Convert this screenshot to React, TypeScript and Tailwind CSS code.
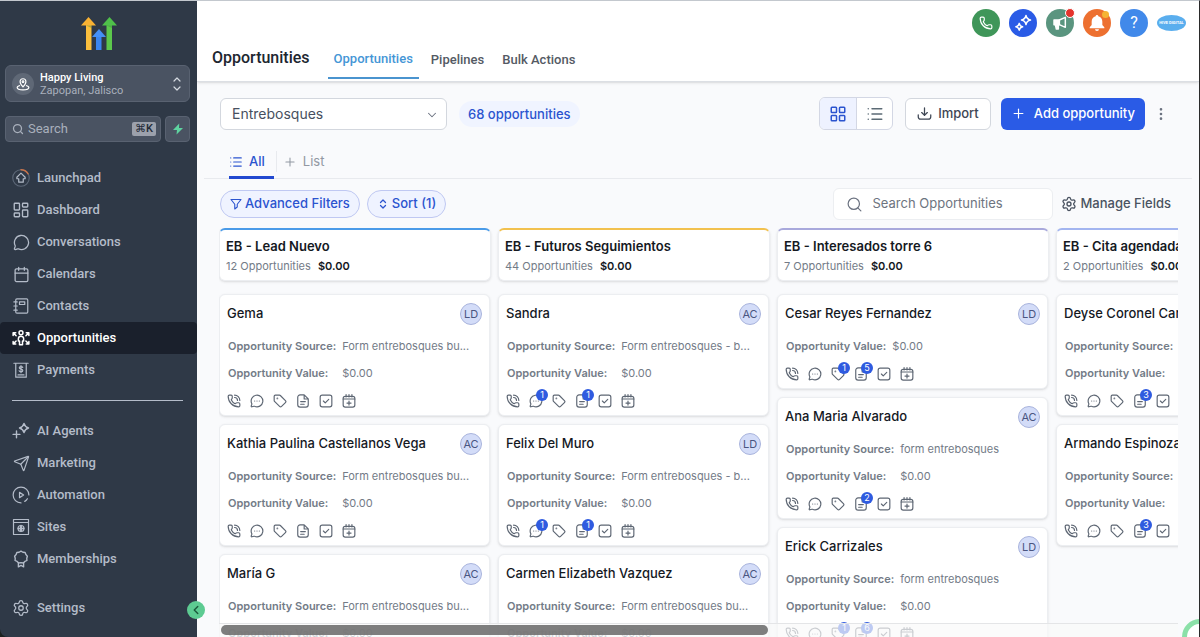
import type { ReactNode } from "react";
import {
  Calendar,
  ChevronDown,
  ChevronLeft,
  ChevronsUpDown,
  EllipsisVertical,
  LayoutDashboard,
  LayoutGrid,
  List,
  MessageCircle,
  MessageCircleMore,
  Phone,
  PhoneCall,
  Plus,
  Search,
  Send,
  Settings,
  Tag,
} from "lucide-react";

type CardIcon = "call" | "chat" | "tag" | "note" | "task" | "event";

type Opportunity = {
  name: string;
  owner: string;
  source?: string;
  badges?: Partial<Record<CardIcon, number>>;
};

type Stage = {
  title: string;
  count: number;
  border: string;
  items: Opportunity[];
};

const stages: Stage[] = [
  {
    title: "EB - Lead Nuevo",
    count: 12,
    border: "border-t-[#4a9be8]",
    items: [
      { name: "Gema", owner: "LD", source: "Form entrebosques bu..." },
      { name: "Kathia Paulina Castellanos Vega", owner: "AC", source: "Form entrebosques bu..." },
      { name: "María G", owner: "AC", source: "Form entrebosques bu..." },
    ],
  },
  {
    title: "EB - Futuros Seguimientos",
    count: 44,
    border: "border-t-[#f2c14e]",
    items: [
      { name: "Sandra", owner: "AC", source: "Form entrebosques - b...", badges: { chat: 1, note: 1 } },
      { name: "Felix Del Muro", owner: "LD", source: "Form entrebosques - b...", badges: { chat: 1, note: 1 } },
      { name: "Carmen Elizabeth Vazquez", owner: "AC", source: "Form entrebosques bu..." },
    ],
  },
  {
    title: "EB - Interesados torre 6",
    count: 7,
    border: "border-t-[#a9a9dc]",
    items: [
      { name: "Cesar Reyes Fernandez", owner: "LD", badges: { tag: 1, note: 5 } },
      { name: "Ana Maria Alvarado", owner: "AC", source: "form entrebosques", badges: { note: 2 } },
      { name: "Erick Carrizales", owner: "LD", source: "form entrebosques", badges: { tag: 1, note: 6 } },
    ],
  },
  {
    title: "EB - Cita agendada",
    count: 2,
    border: "border-t-[#a3b5f0]",
    items: [
      { name: "Deyse Coronel Carrillo", owner: "LD", source: "form entrebosques", badges: { note: 3 } },
      { name: "Armando Espinoza", owner: "AC", source: "form entrebosques", badges: { note: 3 } },
    ],
  },
];

function CardGlyph({ children }: { children: ReactNode }) {
  return (
    <svg
      viewBox="0 0 24 24"
      className="size-3.5"
      fill="none"
      stroke="currentColor"
      strokeWidth="2"
      strokeLinecap="round"
      strokeLinejoin="round"
    >
      {children}
    </svg>
  );
}

const cardIcons: { key: CardIcon; label: string; icon: ReactNode }[] = [
  { key: "call", label: "Call", icon: <PhoneCall className="size-3.5" /> },
  { key: "chat", label: "Message", icon: <MessageCircleMore className="size-3.5" /> },
  { key: "tag", label: "Tags", icon: <Tag className="size-3.5" /> },
  {
    key: "note",
    label: "Notes",
    icon: (
      <CardGlyph>
        <path d="M14 1.500H7a4 4 0 0 0-4 4v13a4 4 0 0 0 4 4h10a4 4 0 0 0 4-4V8.500zM14 1.500v7h7M8 13h8M8 17.500h6" />
      </CardGlyph>
    ),
  },
  {
    key: "task",
    label: "Tasks",
    icon: (
      <CardGlyph>
        <rect x="2" y="2" width="20" height="20" rx="3.500" />
        <path d="m7.500 12 3.200 3.200 6-6" />
      </CardGlyph>
    ),
  },
  {
    key: "event",
    label: "Appointment",
    icon: (
      <CardGlyph>
        <rect x="2" y="4" width="20" height="18.500" rx="3.500" />
        <path d="M2 8.500h20M7 1v4M12 1v4M17 1v4M12 12v7M8.500 15.500h7" />
      </CardGlyph>
    ),
  },
];

function Glyph({ children, width = 1.6 }: { children: ReactNode; width?: number }) {
  return (
    <svg
      viewBox="0 0 24 24"
      className="size-[18px]"
      fill="none"
      stroke="currentColor"
      strokeWidth={width}
      strokeLinecap="round"
      strokeLinejoin="round"
    >
      {children}
    </svg>
  );
}

function LaunchpadIcon() {
  return (
    <Glyph>
      <circle cx="12" cy="12" r="11" stroke="#5d6878" strokeWidth="1.5" />
      <path d="M12 1a11 11 0 0 1 9.5 5.500" stroke="#c9744a" strokeWidth="1.8" />
      <path d="M12 5.500 6.500 11v2H9v4.500h6V13h2.500v-2z" />
    </Glyph>
  );
}

function ContactsIcon() {
  return (
    <Glyph>
      <rect x="5" y="2.500" width="16" height="19" rx="1.500" />
      <path d="M2.500 6.500H7M2.500 12H7M2.500 17.500H7M10 6.500h7v3.500h-7z" />
    </Glyph>
  );
}

function OpportunitiesIcon() {
  return (
    <Glyph width={2}>
      <circle cx="12" cy="5" r="2.600" />
      <path d="M10 21v-5H8.500v-3a3.500 3.500 0 0 1 7 0v3H14v5z" />
      <path d="M1.500 8.500V5H5M2 5.500 5.500 9M22.500 8.500V5H19M22 5.500 18.500 9M1.500 16.500V20H5M2 19.500 5.500 16M22.500 16.500V20H19M22 19.500 18.500 16" />
    </Glyph>
  );
}

function PaymentsIcon() {
  return (
    <Glyph>
      <path d="M2.500 3h19M5 3v18.500h14V3M8 18.500h8" />
      <path d="M14.300 8.500c-.4-.8-1.200-1.100-2.300-1.100-1.300 0-2.300.6-2.300 1.700 0 2.500 4.700 1 4.700 3.500 0 1.200-1 1.800-2.400 1.800-1.200 0-2.100-.4-2.500-1.300M12 6.200v9.300" />
    </Glyph>
  );
}

function AgentsIcon() {
  return (
    <Glyph width={1.9}>
      <path d="M16 2c.8 3.200 2.200 4.800 6 6-3.800 1.200-5.200 2.800-6 6-.8-3.200-2.200-4.800-6-6 3.800-1.200 5.200-2.800 6-6zM6 12v9M1.500 16.500h9" />
    </Glyph>
  );
}

function AutomationIcon() {
  return (
    <Glyph>
      <path d="M22.500 12A10.500 10.500 0 1 0 12 22.500M20.500 17a9 9 0 0 1-3.500 3.500" />
      <path d="m10 8.500 5.500 3.500-5.500 3.500z" />
    </Glyph>
  );
}

function SitesIcon() {
  return (
    <Glyph>
      <path d="M2 2h20v20H2zM2 6h20" />
      <circle cx="12" cy="14" r="4" />
      <path d="M8 14h8M12 10c-1.500 2.500-1.500 5.500 0 8M12 10c1.500 2.500 1.500 5.500 0 8" />
    </Glyph>
  );
}

function MembershipsIcon() {
  return (
    <Glyph width={1.8}>
      <path d="M12 1.500 14.500 3l3 .3 1 2.800 2 2.200-.8 2.700.2 3-2.700 1.200L15 17.300 12 16.800l-3 .5-2.200-2.100L4.100 14l.2-3-.8-2.700 2-2.200 1-2.800 3-.3z" />
      <path d="M8.500 17v5.500l3.500-2 3.500 2V17" />
    </Glyph>
  );
}

function Logo() {
  return (
    <svg viewBox="0 0 36 33" className="h-[33px] w-9">
      <path d="M5 8h5.500v25H5z" fill="#fbbf3d" />
      <path d="M7.500 0 15 8.500H0z" fill="#f9b233" />
      <path d="M25.500 8H31v25h-5.500z" fill="#5cc84c" />
      <path d="M28.500 0 36 8.500H21z" fill="#4fc04a" />
      <path d="M15 19h5.500v14H15z" fill="#3b86f0" />
      <path d="m18 12 7 8H11z" fill="#4590f7" />
      <path d="M5 8.500h5.500V11zM25.500 8.500H31V11z" fill="#2f7a35" opacity=".35" />
    </svg>
  );
}

function SparkleIcon() {
  return (
    <svg viewBox="0 0 24 24" className="size-[18px]" fill="none" stroke="white" strokeWidth="2" strokeLinejoin="round">
      <path d="M16 2c.7 3.500 2.300 5.200 6 6-3.700.8-5.300 2.500-6 6-.7-3.500-2.300-5.200-6-6 3.700-.8 5.300-2.500 6-6zM7 12.500c.5 2.600 1.700 4 4.500 4.500-2.800.6-4 2-4.500 4.500-.6-2.500-1.800-3.900-4.500-4.500 2.700-.5 3.900-1.900 4.500-4.500z" />
    </svg>
  );
}

function MegaphoneIcon() {
  return (
    <svg viewBox="0 0 24 24" className="size-4" fill="none" stroke="white" strokeWidth="2.2" strokeLinejoin="round">
      <path d="M11 7.500 20 3.500v15L11 14.500z" />
      <path d="M3 7.500h8v7H3z" fill="white" />
      <path d="M5 14.500h4.500V21H6.500z" fill="white" />
    </svg>
  );
}

function BellIcon() {
  return (
    <svg viewBox="0 0 24 24" className="size-4" fill="white">
      <path d="M12 0a2 2 0 0 1 2 2c4 1 6 4 6 8v5l3 3.500V20H1v-1.500L4 15v-5c0-4 2-7 6-8a2 2 0 0 1 2-2zM9 21.500h6a3 2.500 0 0 1-6 0z" />
    </svg>
  );
}

const mainNav = [
  { label: "Launchpad", icon: <LaunchpadIcon /> },
  { label: "Dashboard", icon: <LayoutDashboard className="size-[18px]" strokeWidth={1.8} /> },
  { label: "Conversations", icon: <MessageCircle className="size-[17px]" strokeWidth={1.8} /> },
  { label: "Calendars", icon: <Calendar className="size-[17px]" strokeWidth={1.8} /> },
  { label: "Contacts", icon: <ContactsIcon /> },
  { label: "Opportunities", icon: <OpportunitiesIcon />, active: true },
  { label: "Payments", icon: <PaymentsIcon /> },
];

const toolsNav = [
  { label: "AI Agents", icon: <AgentsIcon /> },
  { label: "Marketing", icon: <Send className="size-[17px]" strokeWidth={1.7} /> },
  { label: "Automation", icon: <AutomationIcon /> },
  { label: "Sites", icon: <SitesIcon /> },
  { label: "Memberships", icon: <MembershipsIcon /> },
];

function NavItem({ label, icon, active }: { label: string; icon: ReactNode; active?: boolean }) {
  return (
    <a
      href="#"
      className={`flex h-8 items-center gap-[7px] rounded-sm pl-3 text-[13px] font-medium ${
        active ? "bg-[#1a202c] text-white" : "text-[#b4bcc9]"
      }`}
    >
      <span className="flex w-[18px] justify-center">{icon}</span>
      {label}
    </a>
  );
}

function Sidebar() {
  return (
    <aside className="relative w-[197px] shrink-0 rounded-bl-lg bg-[#2f3947] font-[Roboto,sans-serif]">
      <div className="flex justify-center pt-4">
        <Logo />
      </div>
      <button className="mx-[5px] mt-[15px] flex h-[37px] w-[185px] items-center rounded-md border border-[#596271] bg-[#4a5362] pr-1 pl-1.5 text-left">
        <span className="mr-1.5 flex size-[22px] items-center justify-center rounded-full bg-[#5f6876] text-white">
          <svg viewBox="0 0 24 24" className="size-3.5" fill="none" stroke="currentColor" strokeWidth="2">
            <path d="M12 17c-3-3.500-5-6-5-9a5 5 0 0 1 10 0c0 3-2 5.500-5 9z" />
            <circle cx="12" cy="8" r="1.500" />
            <path d="M7 14.500c-3 .8-5 1.800-5 3.500 0 2.500 4.500 4 10 4s10-1.500 10-4c0-1.700-2-2.700-5-3.500" />
          </svg>
        </span>
        <span className="flex-1 text-[11px] leading-[13px]">
          <span className="block font-medium text-white">Happy Living</span>
          <span className="block text-[#a9b0bc]">Zapopan, Jalisco</span>
        </span>
        <svg
          viewBox="0 0 16 16"
          className="size-4 text-[#d5dae1]"
          fill="none"
          stroke="currentColor"
          strokeWidth="1.200"
          strokeLinecap="round"
          strokeLinejoin="round"
        >
          <path d="m5 5 3-3 3 3M5 11l3 3 3-3" />
        </svg>
      </button>
      <div className="mt-3.5 mr-[7px] ml-[5px] flex gap-1">
        <label className="flex h-[26px] min-w-0 flex-1 items-center rounded border border-[#596271] bg-[#4a5362] pr-1 pl-1.5">
          <Search className="size-3 shrink-0 text-[#a9b0bc]" strokeWidth={2.5} />
          <input
            aria-label="Search"
            placeholder="Search"
            className="min-w-0 flex-1 bg-transparent pl-1 text-[13px] outline-none placeholder:text-[#a9b0bc]"
          />
          <kbd className="rounded-xs bg-[#9ca1ac] px-[3px] font-[Roboto,sans-serif] text-[11px] leading-[14px] font-medium text-[#232b38]">
            ⌘K
          </kbd>
        </label>
        <button
          aria-label="Quick actions"
          className="flex h-[26px] w-[25px] items-center justify-center rounded border border-[#596271] bg-[#4a5362]"
        >
          <svg viewBox="0 0 24 24" className="size-3" fill="#5ed3a0">
            <path d="M14.500 1 2 14h8l-1 9L22 10h-8z" />
          </svg>
        </button>
      </div>
      <nav className="mt-5">
        {mainNav.map((item) => (
          <NavItem key={item.label} {...item} />
        ))}
      </nav>
      <hr className="mt-3.5 mr-3.5 ml-3 border-[#b4bcc9]" />
      <nav className="mt-3.5">
        {toolsNav.map((item) => (
          <NavItem key={item.label} {...item} />
        ))}
      </nav>
      <div className="mt-[17px]">
        <NavItem label="Settings" icon={<Settings className="size-[18px]" strokeWidth={1.7} />} />
      </div>
      <button
        aria-label="Collapse sidebar"
        className="absolute -right-2 bottom-[18px] z-10 flex size-[18px] items-center justify-center rounded-full bg-[#5dcb92]"
      >
        <ChevronLeft className="size-3.5 text-[#1c5a3c]" strokeWidth={2.5} />
      </button>
    </aside>
  );
}

function Header() {
  return (
    <header className="flex h-[81px] shrink-0 items-end border-b border-[#dcdfe4] bg-white pr-[13px] pl-[15px] font-[Roboto,sans-serif] shadow-sm">
      <h1 className="mr-[18px] pb-[13px] text-base leading-5 font-medium text-[#20262f]">Opportunities</h1>
      <nav className="flex items-end text-[13px] leading-5 font-medium text-[#545a64]">
        <a href="#" className="mb-0.5 border-b-2 border-[#4a94cf] px-1.5 pb-2 text-[#4596d6]">
          Opportunities
        </a>
        <a href="#" className="ml-3 pb-[11px]">
          Pipelines
        </a>
        <a href="#" className="ml-[18px] pb-[11px]">
          Bulk Actions
        </a>
      </nav>
      <div className="mt-2 ml-auto flex items-center gap-[9px] self-start">
        <button aria-label="Phone" className="flex size-7 items-center justify-center rounded-full bg-[#3f9659] text-white">
          <Phone className="size-3.5" strokeWidth={2} />
        </button>
        <button aria-label="Ask AI" className="flex size-7 items-center justify-center rounded-full bg-[#2a5be6]">
          <SparkleIcon />
        </button>
        <button aria-label="Announcements" className="relative flex size-7 items-center justify-center rounded-full bg-[#5a957f]">
          <MegaphoneIcon />
          <span className="absolute -top-px -right-px size-[10px] rounded-full border border-white bg-[#e5342d]" />
        </button>
        <button aria-label="Notifications" className="relative flex size-7 items-center justify-center rounded-full bg-[#ed7030]">
          <BellIcon />
          <span className="absolute top-0.5 right-0.5 size-[7px] rounded-full bg-[#f5b335]" />
        </button>
        <button aria-label="Help" className="size-7 rounded-full bg-[#4189ea] text-base text-white">
          ?
        </button>
        <button
          aria-label="Account"
          className="h-4 w-[29px] rounded-[50%] bg-[#5aaeee] text-center text-[4px] leading-4 font-bold whitespace-nowrap text-white"
        >
          HIVE DIGITAL
        </button>
      </div>
    </header>
  );
}

function Toolbar() {
  return (
    <div className="mt-[15px] flex items-center pr-[30px] pl-[23px] text-[13px] font-medium">
      <div className="relative w-[227px]">
        <select
          aria-label="Pipeline"
          className="h-8 w-full appearance-none rounded-md border border-[#d3d7de] bg-white pl-[11px] text-sm font-normal text-[#475060]"
        >
          <option>Entrebosques</option>
        </select>
        <ChevronDown className="pointer-events-none absolute top-2.5 right-2 size-3.5 text-[#6b7280]" strokeWidth={1.8} />
      </div>
      <span className="ml-3 rounded-full bg-[#f0f4ff] px-[9px] leading-[26px] text-[#2b54cf]">68 opportunities</span>
      <div className="ml-auto flex h-[33px] overflow-hidden rounded-md border border-[#d3d7e4] bg-white">
        <button aria-label="Board view" className="flex w-9 items-center justify-center bg-[#eef2ff] text-[#2b54cf]">
          <LayoutGrid className="size-[18px]" />
        </button>
        <button
          aria-label="List view"
          className="flex w-9 items-center justify-center border-l border-[#d3d7e4] text-[#5b6a75]"
        >
          <List className="size-[18px]" />
        </button>
      </div>
      <button className="ml-3 flex h-8 items-center gap-1.5 rounded-md border border-[#d3d7de] bg-white px-[11px] text-[#3e4654]">
        <svg
          viewBox="0 0 24 24"
          className="size-[15px]"
          fill="none"
          stroke="currentColor"
          strokeWidth="2"
          strokeLinecap="round"
          strokeLinejoin="round"
        >
          <path d="M12 3v12M7.500 10.500 12 15l4.500-4.500M2 14v3a4 4 0 0 0 4 4h12a4 4 0 0 0 4-4v-3" />
        </svg>
        Import
      </button>
      <button className="ml-2.5 flex h-8 items-center gap-2 rounded-md bg-[#2a5be6] px-2.5 text-white">
        <Plus className="size-[15px]" strokeWidth={1.8} />
        Add opportunity
      </button>
      <button aria-label="More" className="ml-2 text-[#6b7280]">
        <EllipsisVertical className="size-4" />
      </button>
    </div>
  );
}

function ViewTabs() {
  return (
    <div className="mx-[7px] mt-[17px] flex h-8 border-b border-[#e8eaee] pl-[25px] text-[13px]">
      <button className="flex h-8 items-center gap-1.5 border-b-3 border-[#2249d0] pr-[9px] font-medium text-[#2b54cf]">
        <List className="size-3.5" />
        All
      </button>
      <button className="mt-1 mb-1.5 ml-0.5 flex items-center gap-1.5 border-l border-[#e8eaee] pl-1.5 text-[#9298a2]">
        <Plus className="size-3.5" strokeWidth={1.8} />
        List
      </button>
    </div>
  );
}

function Filters() {
  return (
    <div className="mt-[9px] flex items-center pr-[22px] pl-[23px] text-[13px] font-medium">
      <button className="flex h-7 items-center gap-[3px] rounded-full border border-[#bfc8f2] bg-[#eff3ff] px-[9px] text-[#2b54cf]">
        <svg viewBox="0 0 24 24" className="size-3" fill="none" stroke="currentColor" strokeWidth="2.2" strokeLinejoin="round">
          <path d="M2 3h20l-7.500 9.500V18l-5 4v-9.500z" />
        </svg>
        Advanced Filters
      </button>
      <button className="ml-[7px] flex h-7 items-center gap-[3px] rounded-full border border-[#bfc8f2] bg-[#eff3ff] px-[9px] text-[#2b54cf]">
        <ChevronsUpDown className="size-3" strokeWidth={2.5} />
        Sort (1)
      </button>
      <label className="ml-auto flex h-8 w-[220px] items-center gap-2.5 rounded-md border border-[#eceef1] bg-white px-3">
        <Search className="size-[17px] shrink-0 text-[#6b7280]" strokeWidth={1.7} />
        <input
          aria-label="Search Opportunities"
          placeholder="Search Opportunities"
          className="min-w-0 flex-1 bg-transparent font-normal outline-none placeholder:text-[#6d7480]"
        />
      </label>
      <button className="ml-2 flex items-center gap-1 pr-1.5 text-[#4a5361]">
        <Settings className="size-4" strokeWidth={2} />
        Manage Fields
      </button>
    </div>
  );
}

function OpportunityCard({ item }: { item: Opportunity }) {
  return (
    <article className="mr-px rounded-md border border-[#eceef1] bg-white px-[7px] pt-[7px] shadow-sm">
      <div className="flex h-6 items-center justify-between">
        <h3 className="text-[13px] font-medium whitespace-nowrap text-[#15191f]">{item.name}</h3>
        <span className="flex size-[22px] shrink-0 items-center justify-center rounded-full border border-[#a9b4dd] bg-[#d3dcf8] text-[11px] text-[#4a5580]">
          {item.owner}
        </span>
      </div>
      <dl className="mt-[7px] grid grid-cols-[auto_1fr] gap-x-1.5 pl-px text-[11px] leading-[27px] whitespace-nowrap text-[#737b87]">
        {item.source ? (
          <>
            <dt className="font-semibold">Opportunity Source:</dt>
            <dd>{item.source}</dd>
          </>
        ) : null}
        <dt className="font-semibold">Opportunity Value:</dt>
        <dd>$0.00</dd>
      </dl>
      <div className="flex h-7 items-center gap-[9px] text-[#5d6673]">
        {cardIcons.map(({ key, label, icon }) => (
          <button key={key} aria-label={label} className="relative">
            {icon}
            {item.badges?.[key] ? (
              <span className="absolute -top-[5px] -right-[5px] size-3 rounded-full bg-[#2f5be0] text-center text-[9px] leading-3 text-white">
                {item.badges[key]}
              </span>
            ) : null}
          </button>
        ))}
      </div>
    </article>
  );
}

function StageColumn({ stage }: { stage: Stage }) {
  return (
    <section className="w-[272px] shrink-0">
      <header
        className={`h-[53px] rounded-md border border-t-2 border-[#eceef1] bg-white px-1.5 pt-1.5 whitespace-nowrap shadow-sm ${stage.border}`}
      >
        <h2 className="text-[13px] leading-5 font-semibold text-[#15191f]">{stage.title}</h2>
        <p className="text-[11px] leading-5 text-[#737b87]">
          {stage.count} Opportunities <span className="ml-1 font-semibold text-[#15191f]">$0.00</span>
        </p>
      </header>
      <div className="mt-[13px] flex flex-col gap-2">
        {stage.items.map((item) => (
          <OpportunityCard key={item.name} item={item} />
        ))}
      </div>
    </section>
  );
}

export default function App() {
  return (
    <div className="relative flex h-screen overflow-hidden border-t border-r border-t-[#c3c8ce] border-r-[#2a2a2a] bg-[#1c211f] font-[Inter,sans-serif]">
      <Sidebar />
      <main className="flex min-w-0 flex-1 flex-col bg-[#f9fafc]">
        <Header />
        <Toolbar />
        <ViewTabs />
        <Filters />
        <div className="relative mt-2 mr-[21px] ml-[22px] min-h-0 flex-1 overflow-hidden">
          <div className="flex gap-[7px]">
            {stages.map((stage) => (
              <StageColumn key={stage.title} stage={stage} />
            ))}
          </div>
          {/* horizontal scrollbar floats over the cards */}
          <div className="absolute inset-x-0 bottom-0 h-[14px] border-t border-[#e4e5e7] bg-[#fafafa]/70 pt-px">
            <div className="ml-0.5 h-2.5 w-[57%] rounded-full bg-[#707070]/90" />
          </div>
        </div>
      </main>
      <div className="absolute -right-[19px] -bottom-[18px] size-9 rounded-full border-5 border-[#8be0a8] bg-white" />
    </div>
  );
}
